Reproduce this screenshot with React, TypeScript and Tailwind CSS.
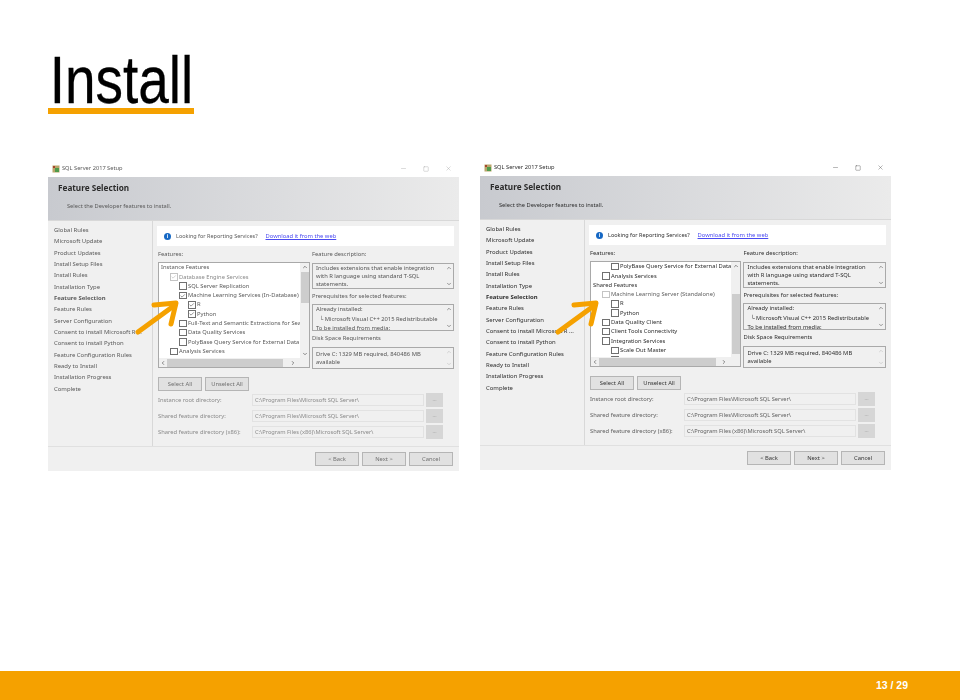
import { Minus, Square, X, ChevronUp, ChevronDown, ChevronLeft, ChevronRight, Check } from "lucide-react";

const navItems = [
  "Global Rules",
  "Microsoft Update",
  "Product Updates",
  "Install Setup Files",
  "Install Rules",
  "Installation Type",
  "Feature Selection",
  "Feature Rules",
  "Server Configuration",
  "Consent to install Microsoft R ...",
  "Consent to install Python",
  "Feature Configuration Rules",
  "Ready to Install",
  "Installation Progress",
  "Complete",
];

type TreeRow = { label: string; level: number; box?: boolean; checked?: boolean; disabled?: boolean };

const treeOne: TreeRow[] = [
  { label: "Instance Features", level: 0 },
  { label: "Database Engine Services", level: 1, box: true, checked: true, disabled: true },
  { label: "SQL Server Replication", level: 2, box: true },
  { label: "Machine Learning Services (In-Database)", level: 2, box: true, checked: true },
  { label: "R", level: 3, box: true, checked: true },
  { label: "Python", level: 3, box: true, checked: true },
  { label: "Full-Text and Semantic Extractions for Search", level: 2, box: true },
  { label: "Data Quality Services", level: 2, box: true },
  { label: "PolyBase Query Service for External Data", level: 2, box: true },
  { label: "Analysis Services", level: 1, box: true },
  { label: "Shared Features", level: 0 },
];

const treeTwo: TreeRow[] = [
  { label: "PolyBase Query Service for External Data", level: 2, box: true },
  { label: "Analysis Services", level: 1, box: true },
  { label: "Shared Features", level: 0 },
  { label: "Machine Learning Server (Standalone)", level: 1, box: true, disabled: true },
  { label: "R", level: 2, box: true },
  { label: "Python", level: 2, box: true },
  { label: "Data Quality Client", level: 1, box: true },
  { label: "Client Tools Connectivity", level: 1, box: true },
  { label: "Integration Services", level: 1, box: true },
  { label: "Scale Out Master", level: 2, box: true },
  { label: "Scale Out Worker", level: 2, box: true },
];

function Arrow({ className }: { className: string }) {
  return (
    <svg className={className} width="46" height="36" viewBox="0 0 46 36" fill="none">
      <path d="M3 33 L40 6" stroke="#f5a100" strokeWidth="5" strokeLinecap="round" />
      <path d="M19 6 L41 4 L36 25" stroke="#f5a100" strokeWidth="5" strokeLinecap="round" strokeLinejoin="round" />
    </svg>
  );
}

function SetupIcon() {
  return (
    <svg width="8" height="8" viewBox="0 0 8 8">
      <rect x="0.5" y="0.5" width="7" height="7" fill="#b9a56a" />
      <rect x="3" y="3" width="4" height="4" fill="#4f9a4a" />
      <rect x="1" y="1" width="2" height="2" fill="#a5462e" />
    </svg>
  );
}

function Button({ label, dark }: { label: string; dark: boolean }) {
  return (
    <div className={`w-[44px] h-[14px] flex items-center justify-center border border-[#b5b5b5] bg-[#e1e1e1] text-[5.8px] ${dark ? "text-[#333333]" : "text-[#6f6f6f]"}`}>
      {label}
    </div>
  );
}

function ScrollBox({ lines, disabled, dark, className, lineClass }: { lines: string[]; disabled?: boolean; dark: boolean; className: string; lineClass: string }) {
  return (
    <div className={`${className} flex border border-[#a9a9a9] overflow-hidden`}>
      <div className={`flex-1 px-[3px] text-[5.8px] whitespace-pre ${lineClass} ${dark ? "text-[#2e2e2e]" : "text-[#555555]"}`}>
        {lines.map(l => (
          <div key={l}>{l}</div>
        ))}
      </div>
      <div className={`w-[9px] flex flex-col justify-between items-center py-[1px] ${disabled ? "text-[#c8c8c8]" : "text-[#777777]"}`}>
        <ChevronUp size={6} strokeWidth={3} />
        <ChevronDown size={6} strokeWidth={3} />
      </div>
    </div>
  );
}

function SetupWindow({ tree, dark, thumbTop, thumbHeight, thumbWidth }: { tree: TreeRow[]; dark: boolean; thumbTop: number; thumbHeight: number; thumbWidth: number }) {
  const text = dark ? "text-[#2e2e2e]" : "text-[#5a5a5a]";
  const faint = dark ? "text-[#5f5f5f]" : "text-[#8a8a8a]";
  const dirs = [
    ["Instance root directory:", "C:\\Program Files\\Microsoft SQL Server\\"],
    ["Shared feature directory:", "C:\\Program Files\\Microsoft SQL Server\\"],
    ["Shared feature directory (x86):", "C:\\Program Files (x86)\\Microsoft SQL Server\\"],
  ];

  return (
    <div className="w-full h-[311px] flex flex-col bg-[#f0f0f0] blur-[0.5px] font-['Noto_Sans',sans-serif]">
      {/* title bar */}
      <div className="h-[17px] bg-white flex items-center pl-[4px] pr-[7px]">
        <SetupIcon />
        <span className={`ml-[2px] text-[5.7px] ${text}`}>SQL Server 2017 Setup</span>
        <div className={`ml-auto flex items-center gap-[16px] ${dark ? "text-[#333333]" : "text-[#999999]"}`}>
          <Minus size={7} strokeWidth={1.2} />
          <Square size={6} strokeWidth={1.4} />
          <X size={7} strokeWidth={1.2} />
        </div>
      </div>

      {/* header */}
      <div className="h-[44px] bg-gradient-to-r from-[#c8cacf] to-[#ebebeb] border-b border-[#d8d8d8] pl-[10px]">
        <div className="mt-[6px] text-[8.2px] leading-[10px] font-bold text-[#2b2b2b]">Feature Selection</div>
        <div className={`mt-[9px] ml-[9px] text-[5.7px] leading-[8px] ${text}`}>Select the Developer features to install.</div>
      </div>

      <div className="flex-1 flex border-b border-[#e0e0e0]">
        {/* nav */}
        <div className="w-[105px] border-r border-[#d8d8d8] pl-[6px] pt-[4px]">
          {navItems.map(item => (
            <div key={item} className={`h-[11.35px] leading-[11.35px] text-[5.95px] whitespace-nowrap ${text} ${item === "Feature Selection" ? "font-bold" : ""}`}>
              {item}
            </div>
          ))}
        </div>

        {/* right side */}
        <div className="flex-1 min-w-0 pl-[4px] pr-[5px] pt-[5px]">
          <div className="h-[20px] bg-white flex items-center pl-[7px]">
            <div className="w-[7px] h-[7px] rounded-full bg-[#1668c4] flex items-center justify-center text-white text-[5px] font-bold leading-none">i</div>
            <span className={`ml-[5px] text-[5.5px] ${text}`}>Looking for Reporting Services?</span>
            <span className="ml-[8px] text-[5.8px] text-[#4a4af0] underline">Download it from the web</span>
          </div>

          <div className="flex gap-[2px] pl-[1px]">
            <div className="w-[152px]">
              <div className={`h-[16px] leading-[16px] text-[5.8px] ${text}`}>Features:</div>
              <div className="relative h-[106px] bg-white border border-[#a9a9a9] overflow-hidden pl-[2px]">
                {tree.map(row => (
                  <div key={row.label} className="flex items-center h-[9.3px] whitespace-nowrap" style={{ paddingLeft: row.level * 9 }}>
                    {row.box && (
                      <span className={`mr-[1.5px] shrink-0 w-[7.5px] h-[7.5px] flex items-center justify-center border ${row.disabled ? "border-[#c4c4c4] text-[#b5b5b5]" : "border-[#707070] text-[#444444]"}`}>
                        {row.checked && <Check size={6} strokeWidth={2.5} />}
                      </span>
                    )}
                    <span className={`text-[5.8px] ${row.disabled ? faint : text}`}>{row.label}</span>
                  </div>
                ))}
                {/* scrollbars */}
                <div className="absolute top-0 right-0 bottom-[9px] w-[9px] bg-[#f0f0f0] flex flex-col justify-between items-center py-[1px] text-[#666666]">
                  <ChevronUp size={6} strokeWidth={3} />
                  <ChevronDown size={6} strokeWidth={3} />
                  <div className="absolute left-[1px] right-0 bg-[#cdcdcd]" style={{ top: thumbTop, height: thumbHeight }} />
                </div>
                <div className="absolute left-0 right-[9px] bottom-0 h-[9px] bg-[#f0f0f0] flex items-center justify-between px-[1px] text-[#666666]">
                  <ChevronLeft size={6} strokeWidth={3} />
                  <ChevronRight size={6} strokeWidth={3} className="mr-[3px]" />
                  <div className="absolute left-[8px] top-[1px] bottom-0 bg-[#cdcdcd]" style={{ width: thumbWidth }} />
                </div>
                <div className="absolute right-0 bottom-0 w-[9px] h-[9px] bg-[#f0f0f0]" />
              </div>
            </div>

            <div className="w-[143px]">
              <div className={`h-[17px] leading-[16px] text-[5.8px] ${text}`}>Feature description:</div>
              <ScrollBox dark={dark} className="h-[26px]" lineClass="pt-[1px] leading-[7.8px]" lines={["Includes extensions that enable integration", "with R language using standard T-SQL", "statements."]} />
              <div className={`h-[15px] leading-[14px] text-[5.8px] ${text}`}>Prerequisites for selected features:</div>
              <ScrollBox dark={dark} className="h-[27px]" lineClass="leading-[9.5px]" lines={["Already installed:", "  └ Microsoft Visual C++ 2015 Redistributable", "To be installed from media:"]} />
              <div className={`h-[16px] leading-[15px] text-[5.8px] ${text}`}>Disk Space Requirements</div>
              <ScrollBox dark={dark} disabled className="h-[22px]" lineClass="pt-[2px] leading-[8px]" lines={["Drive C: 1329 MB required, 840486 MB", "available"]} />
            </div>
          </div>

          <div className="flex gap-[3px] mt-[8px] pl-[1px]">
            <Button label="Select All" dark={dark} />
            <Button label="Unselect All" dark={dark} />
          </div>

          <div className="mt-[2px] pl-[1px] flex flex-col gap-[2px]">
            {dirs.map(([label, path]) => (
              <div key={label} className="flex items-center h-[14px]">
                <span className={`w-[94px] text-[5.8px] whitespace-nowrap ${faint}`}>{label}</span>
                <div className={`w-[172px] h-[12px] border border-[#e2e2e2] px-[2px] flex items-center text-[5.7px] whitespace-nowrap ${faint}`}>{path}</div>
                <div className="ml-[2px] w-[17px] h-[14px] bg-[#d6d6d6] flex items-center justify-center text-[5px] text-[#a8a8a8]">...</div>
              </div>
            ))}
          </div>
        </div>
      </div>

      {/* buttons */}
      <div className="h-[24px] flex items-center justify-end gap-[3px] pr-[6px]">
        <Button label="< Back" dark={dark} />
        <Button label="Next >" dark={dark} />
        <Button label="Cancel" dark={dark} />
      </div>
    </div>
  );
}

export default function App() {
  return (
    <div className="w-[960px] h-[700px] bg-white flex flex-col font-['Liberation_Sans',sans-serif]">
      <div className="pl-[48px] pt-[44px] h-[159px]">
        <h1 className="w-[146px] h-[70px] border-b-[6px] border-[#f5a100] text-[67px] leading-[71px] text-black font-normal">
          <span className="inline-block origin-left scale-x-[0.82] pl-[2px] [-webkit-text-stroke:0.3px_black] blur-[0.3px]">Install</span>
        </h1>
      </div>

      <div className="flex-1 flex items-start gap-[21px] pl-[48px] pr-[70px]">
        <div className="relative w-[411px] mt-[1px]">
          <SetupWindow tree={treeOne} dark={false} thumbTop={9} thumbHeight={31} thumbWidth={116} />
          <Arrow className="absolute left-[87px] top-[139px]" />
        </div>
        <div className="relative w-[411px]">
          <SetupWindow tree={treeTwo} dark={true} thumbTop={32} thumbHeight={60} thumbWidth={117} />
          <Arrow className="absolute left-[75px] top-[140px]" />
        </div>
      </div>

      <div className="h-[29px] bg-[#f5a100] flex items-center justify-end pr-[52px] text-white text-[10.5px] font-bold">
        13 / 29
      </div>
    </div>
  );
}
